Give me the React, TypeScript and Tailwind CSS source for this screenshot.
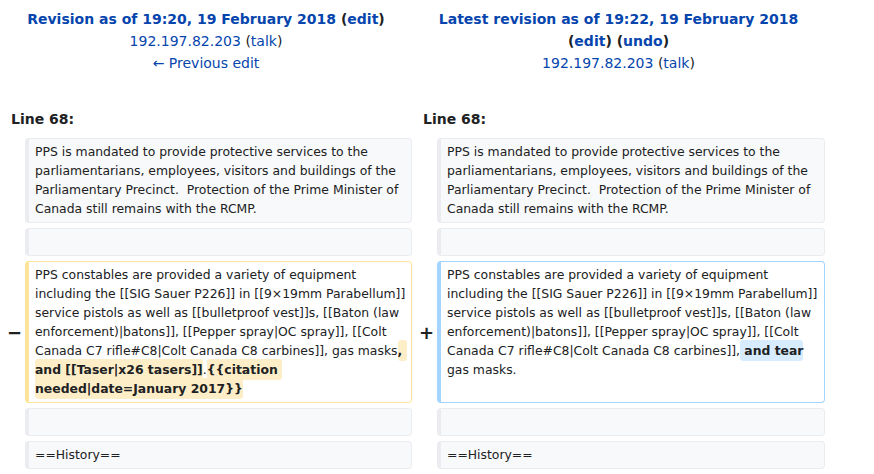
import React from "react";

const font = { fontFamily: '"DejaVu Sans", sans-serif' };

function Box({ kind = "ctx", children }: { kind?: "ctx" | "del" | "add" | "empty"; children?: React.ReactNode }) {
  const cls =
    kind === "del"
      ? "border border-[#ffe49c] border-l-4 bg-white"
      : kind === "add"
      ? "border border-[#a3d3ff] border-l-4 bg-white"
      : "border border-[#eaecf0] border-l-4 bg-[#f8f9fa]";
  return (
    <div className={`${cls} rounded-[4px] pl-[6px] pr-0 pt-[3px] pb-[4px] text-[12.4px] leading-[19px] text-[#202122] whitespace-pre-wrap break-words`}>
      {children ?? "\u00a0"}
    </div>
  );
}

function Marker({ ch }: { ch?: string }) {
  return (
    <div className="flex items-center justify-end pr-[3px] text-[18px] font-bold text-[#202122]">
      {ch}
    </div>
  );
}

const Del = ({ children }: { children: React.ReactNode }) => (
  <span className="bg-[#feeec8] font-bold rounded-[3px] py-[3px]" style={{ boxDecorationBreak: "clone", WebkitBoxDecorationBreak: "clone" }}>
    {children}
  </span>
);
const Ins = ({ children }: { children: React.ReactNode }) => (
  <span className="bg-[#d8ecff] font-bold rounded-[3px] py-[3px]" style={{ boxDecorationBreak: "clone", WebkitBoxDecorationBreak: "clone" }}>
    {children}
  </span>
);

const ctx1 =
  "PPS is mandated to provide protective services to the parliamentarians, employees, visitors and buildings of the Parliamentary Precinct.  Protection of the Prime Minister of Canada still remains with the RCMP.";
const base =
  "PPS constables are provided a variety of equipment including the [[SIG Sauer P226]] in [[9×19mm Parabellum]] service pistols as well as [[bulletproof vest]]s, [[Baton (law enforcement)|batons]], [[Pepper spray|OC spray]], [[Colt Canada C7 rifle#C8|Colt Canada C8 carbines]],";

export default function App() {
  const link = "text-[#0645ad]";
  return (
    <div className="w-[874px] h-[474px] bg-white overflow-hidden" style={font}>
      <div className="grid grid-cols-[25px_387px_25px_388px] gap-y-[5px]">
        {/* headers */}
        <div className="col-span-2 text-center text-[14px] leading-[22px] pt-[8px] text-[#202122]">
          <div className="font-bold">
            <span className={link}>Revision as of 19:20, 19 February 2018</span> (<span className={link}>edit</span>)
          </div>
          <div>
            <span className={link}>192.197.82.203</span> (<span className={link}>talk</span>)
          </div>
          <div>
            <span className={link}>← Previous edit</span>
          </div>
        </div>
        <div className="col-span-2 text-center text-[14px] leading-[22px] pt-[8px] text-[#202122]">
          <div className="font-bold">
            <span className={link}>Latest revision as of 19:22, 19 February 2018</span>
          </div>
          <div className="font-bold">
            (<span className={link}>edit</span>) (<span className={link}>undo</span>)
          </div>
          <div>
            <span className={link}>192.197.82.203</span> (<span className={link}>talk</span>)
          </div>
        </div>

        {/* line numbers */}
        <div className="col-span-2 pl-[11px] pt-[29px] pb-[3px] text-[14px] leading-[22px] font-bold text-[#202122]">Line 68:</div>
        <div className="col-span-2 pl-[11px] pt-[29px] pb-[3px] text-[14px] leading-[22px] font-bold text-[#202122]">Line 68:</div>

        {/* context */}
        <Marker />
        <Box>{ctx1}</Box>
        <Marker />
        <Box>{ctx1}</Box>

        <Marker />
        <Box kind="empty" />
        <Marker />
        <Box kind="empty" />

        {/* change */}
        <Marker ch="−" />
        <Box kind="del">
          {base} gas masks<Del>, and [[Taser|x26 tasers]]</Del>.<Del>{"{{citation needed|date=January 2017}}"}</Del>
        </Box>
        <Marker ch="+" />
        <Box kind="add">
          {base}
          <Ins> and tear</Ins> gas masks.
        </Box>

        <Marker />
        <Box kind="empty" />
        <Marker />
        <Box kind="empty" />

        <Marker />
        <Box>==History==</Box>
        <Marker />
        <Box>==History==</Box>
      </div>
    </div>
  );
}
